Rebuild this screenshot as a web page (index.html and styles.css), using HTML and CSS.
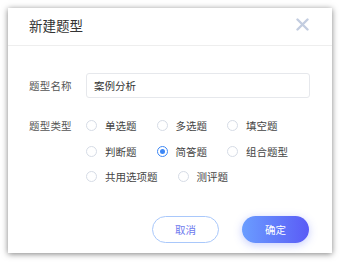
FILE: index.html
```html
<!DOCTYPE html>
<html lang="zh">
<head>
<meta charset="utf-8">
<link rel="stylesheet" href="styles.css">
</head>
<body>
<div class="dialog">
  <div class="header">
    <span class="title">新建题型</span>
    <svg class="close" width="13" height="13" viewBox="0 0 13 13"><path d="M1.5 1.5 L11.5 11.5 M11.5 1.5 L1.5 11.5" stroke="#c3cde0" stroke-width="2.4" stroke-linecap="round"/></svg>
  </div>
  <div class="form">
    <div class="row">
      <span class="label">题型名称</span>
      <div class="input">案例分析</div>
    </div>
    <div class="row types">
      <span class="label">题型类型</span>
      <div class="group">
        <div class="line">
          <span class="radio"><i class="dot"></i>单选题</span>
          <span class="radio"><i class="dot"></i>多选题</span>
          <span class="radio"><i class="dot"></i>填空题</span>
        </div>
        <div class="line">
          <span class="radio"><i class="dot"></i>判断题</span>
          <span class="radio on"><i class="dot"></i>简答题</span>
          <span class="radio"><i class="dot"></i>组合题型</span>
        </div>
        <div class="line">
          <span class="radio"><i class="dot"></i>共用选项题</span>
          <span class="radio"><i class="dot"></i>测评题</span>
        </div>
      </div>
    </div>
  </div>
  <div class="footer">
    <button class="btn cancel">取消</button>
    <button class="btn ok">确定</button>
  </div>
</div>
</body>
</html>
```
FILE: styles.css
```css
html, body {
  margin: 0;
  padding: 0;
  background: #fff;
}
body {
  font-family: "Noto Sans CJK SC", "Noto Sans", sans-serif;
  width: 340px;
  height: 262px;
  overflow: hidden;
}
.dialog {
  margin: 8px;
  width: 324px;
  height: 245px;
  background: #fff;
  box-shadow: 0 1px 6px rgba(0, 0, 0, 0.5);
  display: flex;
  flex-direction: column;
}
.header {
  height: 38px;
  box-sizing: border-box;
  padding: 0 23px 4px 21px;
  border-bottom: 1px solid #eeeeee;
  display: flex;
  align-items: center;
  justify-content: space-between;
}
.title {
  font-size: 13.5px;
  color: #333;
}
.close {
  display: block;
}
.form {
  padding: 27px 22px 0 21px;
  display: flex;
  flex-direction: column;
  gap: 15px;
}
.row {
  display: flex;
  align-items: center;
}
.label {
  width: 57px;
  flex: none;
  font-size: 10.5px;
  color: #555;
  letter-spacing: 0.2px;
}
.input {
  flex: 1;
  height: 25px;
  box-sizing: border-box;
  border: 1px solid #e6e8ec;
  border-radius: 3px;
  padding-left: 7px;
  display: flex;
  align-items: center;
  font-size: 10.5px;
  color: #333;
}
.types {
  align-items: flex-start;
}
.types .label {
  line-height: 25.5px;
}
.group {
  display: flex;
  flex-direction: column;
}
.line {
  height: 25.5px;
  display: flex;
  align-items: center;
}
.radio {
  display: flex;
  align-items: center;
  gap: 8px;
  margin-right: 20px;
  font-size: 10.5px;
  color: #444;
}
.dot {
  width: 11px;
  height: 11px;
  box-sizing: border-box;
  border: 1px solid #d6dce6;
  border-radius: 50%;
  display: flex;
  align-items: center;
  justify-content: center;
}
.radio.on .dot {
  border-color: #3d87f5;
}
.radio.on .dot::after {
  content: "";
  width: 5px;
  height: 5px;
  border-radius: 50%;
  background: #3d87f5;
}
.footer {
  margin-top: auto;
  padding: 0 23px 10px 0;
  display: flex;
  justify-content: flex-end;
  gap: 23px;
}
.btn {
  width: 67px;
  height: 27px;
  border-radius: 14px;
  font-family: inherit;
  font-size: 10.5px;
  padding: 0;
  cursor: pointer;
}
.cancel {
  background: #fff;
  border: 1px solid #a9c8fb;
  color: #6c78ee;
}
.ok {
  border: none;
  color: #fff;
  background: linear-gradient(90deg, #6a9dff, #5a5bf6);
  box-shadow: 0 2px 8px rgba(90, 110, 250, 0.35);
}
```
